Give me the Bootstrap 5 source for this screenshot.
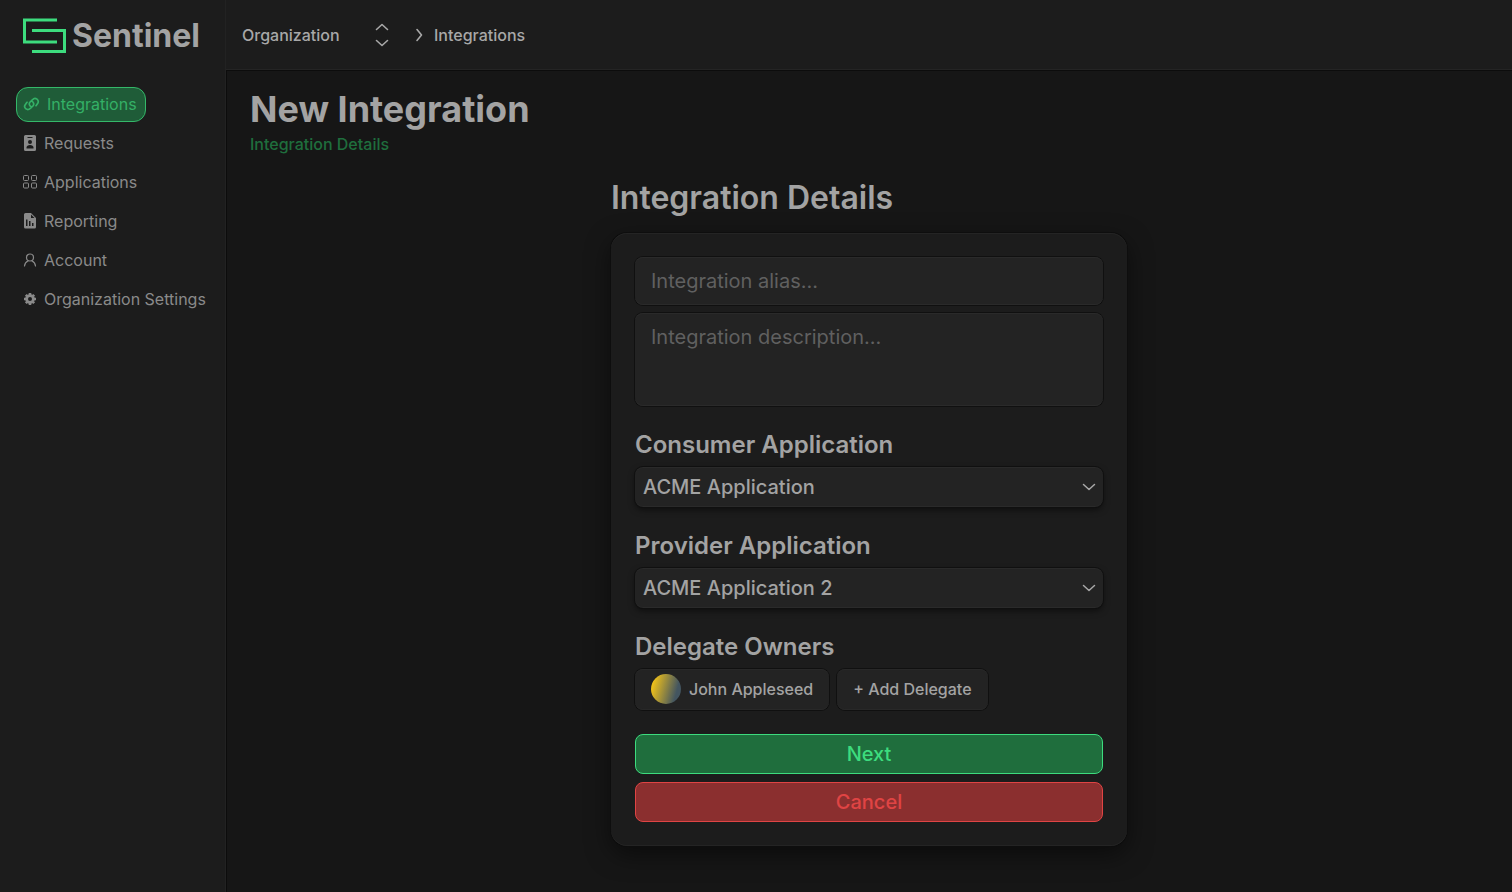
<!DOCTYPE html>
<html lang="en" data-bs-theme="dark">
<head>
<meta charset="utf-8">
<meta name="viewport" content="width=device-width, initial-scale=1">
<title>Sentinel – New Integration</title>
<link href="https://cdn.jsdelivr.net/npm/bootstrap@5.3.0/dist/css/bootstrap.min.css" rel="stylesheet">
<style>
  body { font-family: Inter, "Liberation Sans", sans-serif; font-size: 16px; line-height: 24px; background: #161616; color: #a3a3a3; }
  .side-panel { width: 226px; background: #1c1c1c; box-shadow: inset -1px 0 #222; }
  .brand { height: 71px; padding: 0 23px; gap: 6px; color: #a3a3a3; font-size: 32px; font-weight: 700; }
  .side-nav { padding: 16px; gap: 4px; }
  .side-nav .nav-link { display: flex; align-items: center; gap: 7px; height: 35px; padding: 0 8px 2px 6px; border: 1px solid transparent; border-radius: 12px; color: #8a8a8a; font-weight: 400; white-space: nowrap; }
  .side-nav .nav-link.active { background: #1f5c38; border-color: #34b869; color: #34b066; }
  .top-bar { height: 70px; padding: 0 16px; background: #1c1c1c; border-bottom: 1px solid #242424; }
  .org-switch { width: 148px; padding: 0; border: 0; background: none; color: #a8a8a8; font-weight: 500; }
  .crumb { color: #a8a8a8; text-decoration: none; font-weight: 500; }
  .page-body { padding: 16px 24px; box-shadow: inset 1px 1px #0c0c0c; }
  .page-title { font-size: 36px; line-height: 46px; font-weight: 700; color: #a3a3a3; }
  .step-name { color: #1f6e3d; font-weight: 500; }
  .form-col { max-width: 516px; padding-top: 20px; }
  .form-title { font-size: 32px; line-height: 44px; font-weight: 600; margin-bottom: 13px; color: #a3a3a3; }
  .panel { background: #1c1c1c; border-radius: 16px; padding: 24px; box-shadow: 0 0 0 1px #0e0e0e, inset 0 1px #242424, inset 0 -1px #242424, 0 8px 24px rgba(0,0,0,.5); }
  .group-title { display: block; font-size: 24px; line-height: 29px; font-weight: 600; margin-top: 24px; padding-bottom: 8px; color: #a3a3a3; }
  .field, .field:focus { border: 0; border-radius: 8px; background-color: #232323; color: #a3a3a3; font-size: 20px; line-height: 24px; box-shadow: 0 0 0 1px #101010, inset 0 1px #2a2a2a, inset 0 -1px #2a2a2a; }
  .field::placeholder { color: #606060; }
  input.field { height: 48px; padding: 12px 16px; }
  textarea.field { height: 93px; padding: 12px 16px; resize: none; }
  select.field { height: 40px; padding: 8px 32px 8px 8px; font-weight: 500; background-size: 14px 14px; background-position: right 7px center;
    background-image: url("data:image/svg+xml,%3Csvg xmlns='http://www.w3.org/2000/svg' viewBox='0 0 14 14'%3E%3Cpath d='M1.5 4.5 7 9.5l5.500-5' fill='none' stroke='%23a8a8a8' stroke-width='1.500' stroke-linecap='round' stroke-linejoin='round'/%3E%3C/svg%3E");
    box-shadow: 0 0 0 1px #101010, inset 0 1px #2a2a2a, inset 0 -1px #2a2a2a, 0 3px 6px rgba(0,0,0,.5); }
  .chip { display: flex; align-items: center; gap: 8px; height: 41px; padding: 0 16px 1px; border: 0; border-radius: 8px; background: #232323; color: #a3a3a3; font-weight: 500; box-shadow: 0 0 0 1px #101010, inset 0 1px #282828, inset 0 -1px #282828; }
  .avatar { width: 30px; height: 30px; border-radius: 50%; background: linear-gradient(105deg, #eec01b 12%, #435560 80%); }
  .action { height: 40px; padding: 0; border-radius: 8px; font-size: 20px; font-weight: 500; }
  .action-next, .action-next:hover { background: #1f6e3d; border-color: #3ddc7e; color: #3ddc7e; }
  .action-cancel, .action-cancel:hover { background: #8b2f2f; border-color: #e04444; color: #e04444; }
</style>
</head>
<body>
<div class="d-flex min-vh-100">
  <aside class="side-panel flex-shrink-0">
    <a class="brand d-flex align-items-center text-decoration-none" href="#">
      <svg class="flex-shrink-0" width="43" height="36" viewBox="0 0 43 36" fill="none" stroke="#3ddc7e" stroke-width="3"><path d="M34 2H1.500v22H34M9 12.500h32.500v21H9"/></svg>
      <span>Sentinel</span>
    </a>
    <nav class="side-nav nav flex-column align-items-start">
      <a class="nav-link active" href="#">
        <svg width="17" height="16" viewBox="0 0 17 16" fill="none" stroke="currentColor" stroke-width="1.700" stroke-linecap="round"><path d="M8.200 10.800A3 3 0 0 1 6.900 6.200L9.600 3.700A3.100 3.100 0 0 1 14.600 7.500L13 9.700M8.800 5.200A3 3 0 0 1 10.100 9.800L7.400 12.300A3.100 3.100 0 0 1 2.400 8.500L4 6.300"/></svg>
        Integrations</a>
      <a class="nav-link" href="#">
        <svg width="14" height="16" viewBox="0 0 14 16"><path fill="currentColor" fill-rule="evenodd" d="M2.500 0h9A1.500 1.500 0 0 1 13 1.500v13a1.500 1.500 0 0 1-1.500 1.500h-9A1.500 1.500 0 0 1 1 14.500v-13A1.500 1.500 0 0 1 2.500 0zM4.500 2v1h5V2zM7 5a2 2 0 1 0 0 4 2 2 0 0 0 0-4zM3.500 13.500h7v-1C10.500 11 9 10 7 10s-3.500 1-3.500 2.500z"/></svg>
        Requests</a>
      <a class="nav-link" href="#">
        <svg width="14" height="14" viewBox="0 0 14 14" fill="none" stroke="currentColor"><rect x=".5" y=".5" width="5" height="5" rx="1"/><rect x="8.500" y=".5" width="5" height="5" rx="1"/><rect x=".5" y="8" width="5" height="5" rx="1"/><rect x="8.500" y="8" width="5" height="5" rx="1"/></svg>
        Applications</a>
      <a class="nav-link" href="#">
        <svg width="14" height="16" viewBox="0 0 14 16"><path fill="currentColor" fill-rule="evenodd" d="M2.500 0H8l5 5v9a1.500 1.500 0 0 1-1.500 1.500h-9A1.500 1.500 0 0 1 1 14V1.500A1.500 1.500 0 0 1 2.500 0zM8 1.500V5h3.500zM3 6.500V13h1.500V6.500zM6 8v5h1.500V8zM9 10v3h1.500v-3z"/></svg>
        Reporting</a>
      <a class="nav-link" href="#">
        <svg width="14" height="14" viewBox="0 0 14 14" fill="none" stroke="currentColor" stroke-width="1.200" stroke-linecap="round"><circle cx="7" cy="4.500" r="3.500"/><path d="M1.500 13c.3-2.500 1.700-4.300 3.500-5M12.500 13c-.3-2.500-1.700-4.300-3.500-5"/></svg>
        Account</a>
      <a class="nav-link" href="#">
        <svg width="14" height="14" viewBox="0 0 14 14" fill="none" stroke="currentColor"><circle cx="7" cy="7" r="3.400" stroke-width="2.800"/><path stroke-width="2.600" d="M7 1v2M7 11v2M1 7h2M11 7h2M2.800 2.800l1.400 1.400M9.800 9.800l1.400 1.400M2.800 11.200l1.400-1.400M9.800 4.200l1.400-1.400"/></svg>
        Organization Settings</a>
    </nav>
  </aside>

  <div class="flex-grow-1 d-flex flex-column">
    <header class="top-bar d-flex align-items-center">
      <button class="org-switch d-flex align-items-center justify-content-between" type="button">
        Organization
        <svg width="16" height="24" viewBox="0 0 16 24" fill="none" stroke="currentColor" stroke-width="1.600" stroke-linecap="round" stroke-linejoin="round"><path d="M2.500 6.500 8 1.500l5.500 5M2.500 17.500l5.500 5 5.500-5"/></svg>
      </button>
      <svg class="ms-4 me-2" width="12" height="14" viewBox="0 0 12 14" fill="none" stroke="#a8a8a8" stroke-width="1.600" stroke-linecap="round" stroke-linejoin="round"><path d="m3 1.500 4.500 5.500-4.500 5.500"/></svg>
      <a class="crumb" href="#">Integrations</a>
    </header>

    <main class="page-body flex-grow-1">
      <h1 class="page-title mb-0">New Integration</h1>
      <div class="step-name">Integration Details</div>

      <div class="form-col mx-auto">
        <h2 class="form-title">Integration Details</h2>
        <form class="panel">
          <input class="field form-control mb-2" type="text" placeholder="Integration alias..." aria-label="Integration alias">
          <textarea class="field form-control" placeholder="Integration description..." aria-label="Integration description"></textarea>
          <label class="group-title" for="consumer">Consumer Application</label>
          <select class="field form-select" id="consumer"><option>ACME Application</option></select>
          <label class="group-title" for="provider">Provider Application</label>
          <select class="field form-select" id="provider"><option>ACME Application 2</option></select>
          <h3 class="group-title mb-0">Delegate Owners</h3>
          <div class="d-flex gap-2 mb-4">
            <button class="chip" type="button"><span class="avatar"></span>John Appleseed</button>
            <button class="chip" type="button">+ Add Delegate</button>
          </div>
          <div class="d-grid gap-2">
            <button class="action action-next btn" type="submit">Next</button>
            <button class="action action-cancel btn" type="button">Cancel</button>
          </div>
        </form>
      </div>
    </main>
  </div>
</div>
<script src="https://cdn.jsdelivr.net/npm/bootstrap@5.3.0/dist/js/bootstrap.bundle.min.js"></script>
</body>
</html>
